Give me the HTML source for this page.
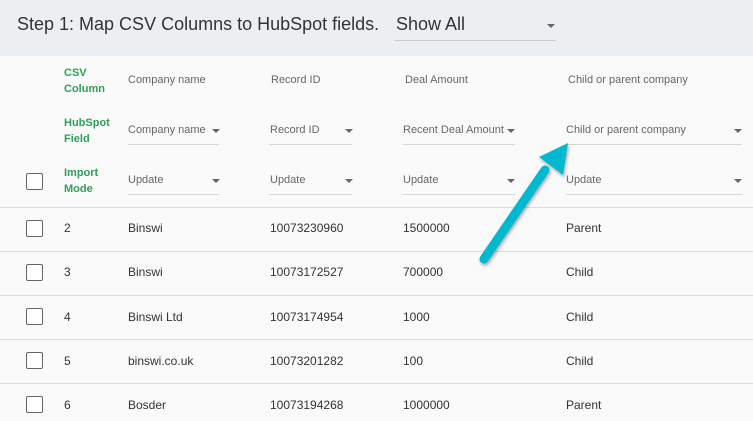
<html><head><style>
body{margin:0;width:753px;height:421px;overflow:hidden;background:#fafafa;font-family:"Liberation Sans",sans-serif;position:relative}
.hdr{position:absolute;left:0;top:0;width:753px;height:56px;background:#eceff2}
.t{position:absolute;white-space:nowrap}
.g{color:#2e9e5b;font-weight:bold;font-size:11px;line-height:16px}
.h{color:#666;font-size:11px}
.s{color:#666;font-size:11px}
.ul{position:absolute;height:1px;background:#d8d8d8}
.car{position:absolute;width:0;height:0;border-left:4px solid transparent;border-right:4px solid transparent;border-top:4px solid #666}
.cb{position:absolute;left:26px;width:15px;height:15px;border:1.5px solid #666;border-radius:2px;background:#fff}
.ln{position:absolute;left:0;width:753px;height:1px;background:#ddd}
.c{color:#333;font-size:12px}
</style></head><body>
<div class="hdr"></div>
<div class="t" style="left:17px;top:14px;font-size:18px;color:#333">Step 1: Map CSV Columns to HubSpot fields.</div>
<div class="t" style="left:396px;top:14px;font-size:18px;color:#333">Show All</div>
<div class="car" style="left:547px;top:24px"></div>
<div class="ul" style="left:395px;top:40px;width:161px;background:#ccc"></div>

<div class="t g" style="left:64px;top:65px">CSV<br>Column</div>
<div class="t h" style="left:128px;top:74px">Company name</div>
<div class="t h" style="left:271px;top:74px">Record ID</div>
<div class="t h" style="left:405px;top:74px">Deal Amount</div>
<div class="t h" style="left:568px;top:74px">Child or parent company</div>

<div class="t g" style="left:64px;top:115px">HubSpot<br>Field</div>
<div class="t s" style="left:128px;top:124px">Company name</div><div class="car" style="left:212px;top:129px"></div><div class="ul" style="left:128px;top:144px;width:91px"></div>
<div class="t s" style="left:270px;top:124px">Record ID</div><div class="car" style="left:345px;top:129px"></div><div class="ul" style="left:269px;top:144px;width:83px"></div>
<div class="t s" style="left:403px;top:124px">Recent Deal Amount</div><div class="car" style="left:507px;top:129px"></div><div class="ul" style="left:403px;top:144px;width:112px"></div>
<div class="t s" style="left:566px;top:124px">Child or parent company</div><div class="car" style="left:734px;top:129px"></div><div class="ul" style="left:566px;top:144px;width:176px"></div>

<div class="t g" style="left:64px;top:165px">Import<br>Mode</div>
<div class="cb" style="top:173px"></div>
<div class="t s" style="left:128px;top:174px">Update</div><div class="car" style="left:212px;top:179px"></div><div class="ul" style="left:128px;top:194px;width:91px"></div>
<div class="t s" style="left:270px;top:174px">Update</div><div class="car" style="left:345px;top:179px"></div><div class="ul" style="left:269px;top:194px;width:83px"></div>
<div class="t s" style="left:403px;top:174px">Update</div><div class="car" style="left:507px;top:179px"></div><div class="ul" style="left:403px;top:194px;width:112px"></div>
<div class="t s" style="left:566px;top:174px">Update</div><div class="car" style="left:734px;top:179px"></div><div class="ul" style="left:566px;top:194px;width:176px"></div>

<div class="ln" style="top:207px"></div>
<div class="cb" style="top:220px"></div><div class="t c" style="left:64px;top:221px">2</div><div class="t c" style="left:128px;top:221px">Binswi</div><div class="t c" style="left:270px;top:221px">10073230960</div><div class="t c" style="left:403px;top:221px">1500000</div><div class="t c" style="left:566px;top:221px">Parent</div>
<div class="ln" style="top:251px"></div>
<div class="cb" style="top:264px"></div><div class="t c" style="left:64px;top:265px">3</div><div class="t c" style="left:128px;top:265px">Binswi</div><div class="t c" style="left:270px;top:265px">10073172527</div><div class="t c" style="left:403px;top:265px">700000</div><div class="t c" style="left:566px;top:265px">Child</div>
<div class="ln" style="top:295px"></div>
<div class="cb" style="top:308px"></div><div class="t c" style="left:64px;top:310px">4</div><div class="t c" style="left:128px;top:310px">Binswi Ltd</div><div class="t c" style="left:270px;top:310px">10073174954</div><div class="t c" style="left:403px;top:310px">1000</div><div class="t c" style="left:566px;top:310px">Child</div>
<div class="ln" style="top:339px"></div>
<div class="cb" style="top:352px"></div><div class="t c" style="left:64px;top:354px">5</div><div class="t c" style="left:128px;top:354px">binswi.co.uk</div><div class="t c" style="left:270px;top:354px">10073201282</div><div class="t c" style="left:403px;top:354px">100</div><div class="t c" style="left:566px;top:354px">Child</div>
<div class="ln" style="top:383px"></div>
<div class="cb" style="top:396px"></div><div class="t c" style="left:64px;top:398px">6</div><div class="t c" style="left:128px;top:398px">Bosder</div><div class="t c" style="left:270px;top:398px">10073194268</div><div class="t c" style="left:403px;top:398px">1000000</div><div class="t c" style="left:566px;top:398px">Parent</div>

<svg style="position:absolute;left:0;top:0" width="753" height="421">
<defs><filter id="sh"><feDropShadow dx="1" dy="2" stdDeviation="1.5" flood-color="#000" flood-opacity="0.35"/></filter></defs>
<g filter="url(#sh)">
<line x1="484" y1="259" x2="545" y2="170" stroke="#00b8d0" stroke-width="9" stroke-linecap="round"/>
<polygon points="568,143 539,157 563,175" fill="#00b8d0"/>
</g>
</svg>
</body></html>
